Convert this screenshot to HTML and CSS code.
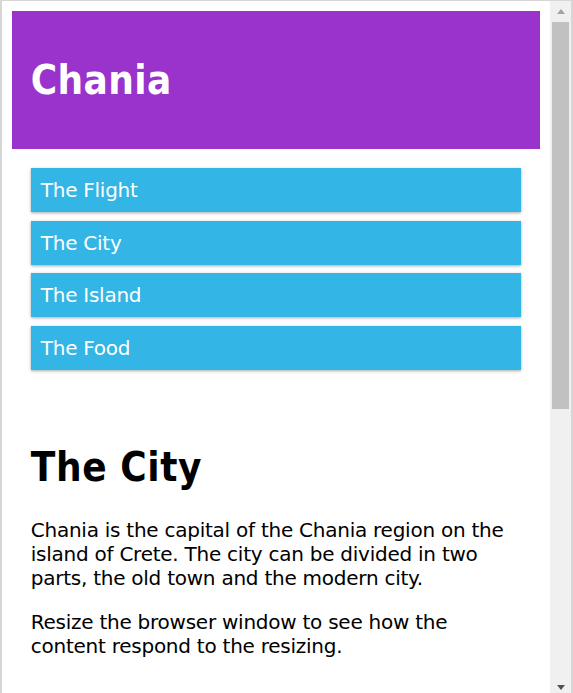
FILE: index.html
```html
<!DOCTYPE html>
<html lang="en">
<head>
<meta charset="utf-8">
<title>Chania</title>
<link rel="stylesheet" href="styles.css">
</head>
<body>
<div class="frame">
  <div class="viewport">
    <div class="content">
      <div class="header">
        <h1>Chania</h1>
      </div>
      <div class="row">
        <div class="col menu">
          <ul>
            <li>The Flight</li>
            <li>The City</li>
            <li>The Island</li>
            <li>The Food</li>
          </ul>
        </div>
        <div class="col main">
          <h1 class="title">The City</h1>
          <p>Chania is the capital of the Chania region on the island of Crete. The city can be divided in two parts, the old town and the modern city.</p>
          <p>Resize the browser window to see how the content respond to the resizing.</p>
        </div>
      </div>
    </div>
  </div>
  <div class="scrollbar">
    <div class="sb-btn"><span class="arrow-up"></span></div>
    <div class="sb-track"><div class="sb-thumb"></div></div>
    <div class="sb-btn"><span class="arrow-down"></span></div>
  </div>
</div>
</body>
</html>
```

FILE: styles.css
```css
* {
  box-sizing: border-box;
}

html, body {
  margin: 0;
  padding: 0;
  background: #ffffff;
  overflow: hidden;
}

.frame {
  display: flex;
  width: 573px;
  height: 700px;
  border-top: 1px solid #d6d6d6;
  border-left: 2px solid #d6d6d6;
  border-right: 2px solid #d6d6d6;
  border-bottom: 2px solid #d6d6d6;
}

.viewport {
  flex: 1;
  min-width: 0;
  overflow: hidden;
  font-family: "DejaVu Sans", sans-serif;
  font-size: 20px;
  letter-spacing: -0.25px;
  color: #000000;
}

/* drawn scrollbar */
.scrollbar {
  width: 21px;
  flex: none;
  display: flex;
  flex-direction: column;
  background: #f0f0f0;
}

.sb-btn {
  height: 21px;
  flex: none;
  display: flex;
  align-items: center;
  justify-content: center;
}

.arrow-up {
  width: 0;
  height: 0;
  border-left: 4.5px solid transparent;
  border-right: 4.5px solid transparent;
  border-bottom: 5px solid #a3a3a3;
}

.arrow-down {
  width: 0;
  height: 0;
  border-left: 4.5px solid transparent;
  border-right: 4.5px solid transparent;
  border-top: 5px solid #505050;
}

.sb-track {
  flex: 1;
  padding: 0 2px;
}

.sb-thumb {
  height: 387px;
  background: #c1c1c1;
}

/* page content */
.content {
  padding: 10px;
}

.header {
  background-color: #9933cc;
  color: #ffffff;
  padding: 18.75px;
}

h1 {
  font-family: "DejaVu Sans Condensed", "DejaVu Sans", sans-serif;
  font-stretch: condensed;
  font-size: 40px;
  font-weight: bold;
  letter-spacing: 0.4px;
  line-height: 47px;
  margin: 26.8px 0;
}

h1.title {
  letter-spacing: 0.6px;
  line-height: 48px;
}

p {
  margin: 20px 0;
  line-height: 24px;
}

.col {
  padding: 18.75px;
}

.menu ul {
  list-style: none;
  margin: 0;
  padding: 0;
}

.menu li {
  padding: 10px;
  margin-bottom: 8.75px;
  line-height: 24px;
  background-color: #33b5e5;
  color: #ffffff;
  box-shadow: 0 1.25px 3.75px rgba(0, 0, 0, 0.12), 0 1.25px 2.5px rgba(0, 0, 0, 0.24);
}
```
